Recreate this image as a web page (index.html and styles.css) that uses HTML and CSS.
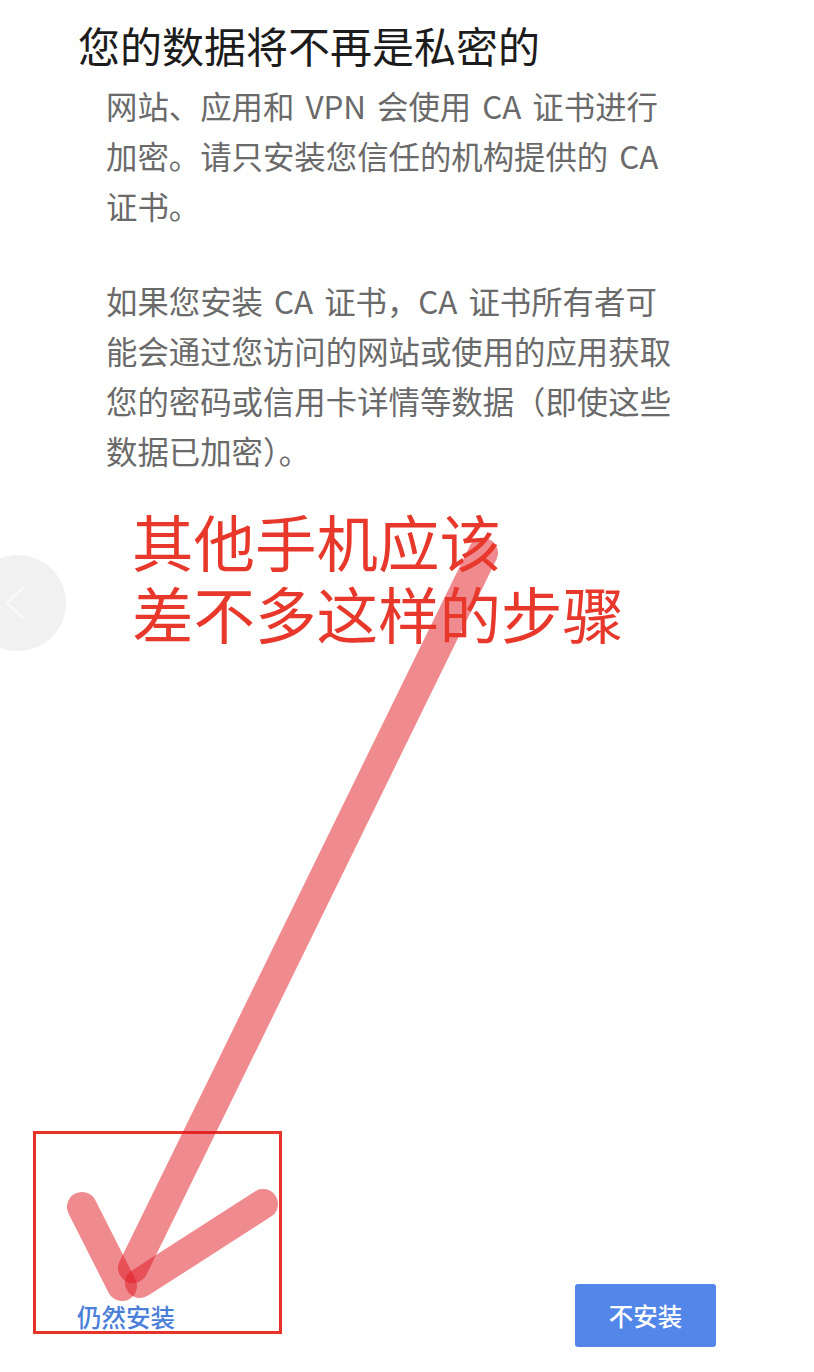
FILE: index.html
```html
<!DOCTYPE html>
<html lang="zh-CN">
<head>
<meta charset="utf-8">
<title>CA 证书</title>
<link rel="stylesheet" href="styles.css">
</head>
<body>
<div class="page">
  <h1 class="title">您的数据将不再是私密的</h1>
  <div class="body">
    <p class="para">网站、应用和 VPN 会使用 CA 证书进行<br>加密。请只安装您信任的机构提供的 CA<br>证书。</p>
    <p class="para para-2">如果您安装 CA 证书，CA 证书所有者可<br>能会通过您访问的网站或使用的应用获取<br>您的密码或信用卡详情等数据（即使这些<br>数据已加密）。</p>
  </div>
  <div class="note">其他手机应该<br>差不多这样的步骤</div>
  <div class="footer">
    <span class="link-btn">仍然安装</span>
    <span class="primary-btn">不安装</span>
  </div>

  <div class="side-btn">
    <svg width="20" height="34" viewBox="0 0 20 34"><path d="M18 2 L2 17 L18 32" fill="none" stroke="#fafafa" stroke-width="2.5" stroke-linecap="round" stroke-linejoin="round"/></svg>
  </div>
  <div class="mark-box"></div>
  <svg class="arrow" width="814" height="1372" viewBox="0 0 814 1372">
    <g fill="none" stroke="#df151f" stroke-width="30" stroke-linecap="round" stroke-opacity="0.5">
      <path d="M483 553 L133 1268"/>
      <path d="M82 1207 L122 1286"/>
      <path d="M263 1204 L140 1283"/>
    </g>
  </svg>
</div>
</body>
</html>
```

FILE: styles.css
```css
html, body {
  margin: 0;
  padding: 0;
  background: #ffffff;
}
.page {
  position: relative;
  width: 814px;
  height: 1372px;
  overflow: hidden;
  display: flex;
  flex-direction: column;
  font-family: "Noto Sans CJK SC", "Noto Sans", sans-serif;
}
.title {
  margin: 20px 0 0 78px;
  font-size: 42px;
  line-height: 50px;
  font-weight: 400;
  color: #1c1c1c;
}
.body {
  margin: 11px 0 0 106px;
  width: 600px;
}
.para {
  margin: 0;
  font-size: 31.4px;
  line-height: 50px;
  color: #6a6a6a;
  white-space: nowrap;
  word-spacing: 4px;
}
.para-2 {
  margin-top: 45px;
}
.note {
  position: relative;
  z-index: 2;
  margin: 29px 0 0 132px;
  font-size: 61.5px;
  line-height: 72px;
  color: #e8382c;
}
.footer {
  margin-top: auto;
  display: flex;
  align-items: flex-end;
  justify-content: space-between;
  padding: 0 98px 25px 77px;
}
.link-btn {
  font-size: 24.5px;
  line-height: 34px;
  font-weight: 500;
  color: #4a7ed8;
  margin-bottom: 13px;
}
.primary-btn {
  width: 141px;
  height: 63px;
  display: flex;
  align-items: center;
  justify-content: center;
  background: #5286e9;
  color: #ffffff;
  border-radius: 3px;
  font-size: 24.5px;
  font-weight: 500;
}
.side-btn {
  position: absolute;
  left: -30px;
  top: 555px;
  width: 96px;
  height: 96px;
  border-radius: 50%;
  background: #f1f1f1;
  display: flex;
  align-items: center;
  justify-content: flex-start;
  padding-left: 35px;
  box-sizing: border-box;
}
.mark-box {
  position: absolute;
  left: 33px;
  top: 1131px;
  width: 243px;
  height: 197px;
  border: 3px solid #e8332a;
}
.arrow {
  position: absolute;
  left: 0;
  top: 0;
  z-index: 1;
  pointer-events: none;
}
```
